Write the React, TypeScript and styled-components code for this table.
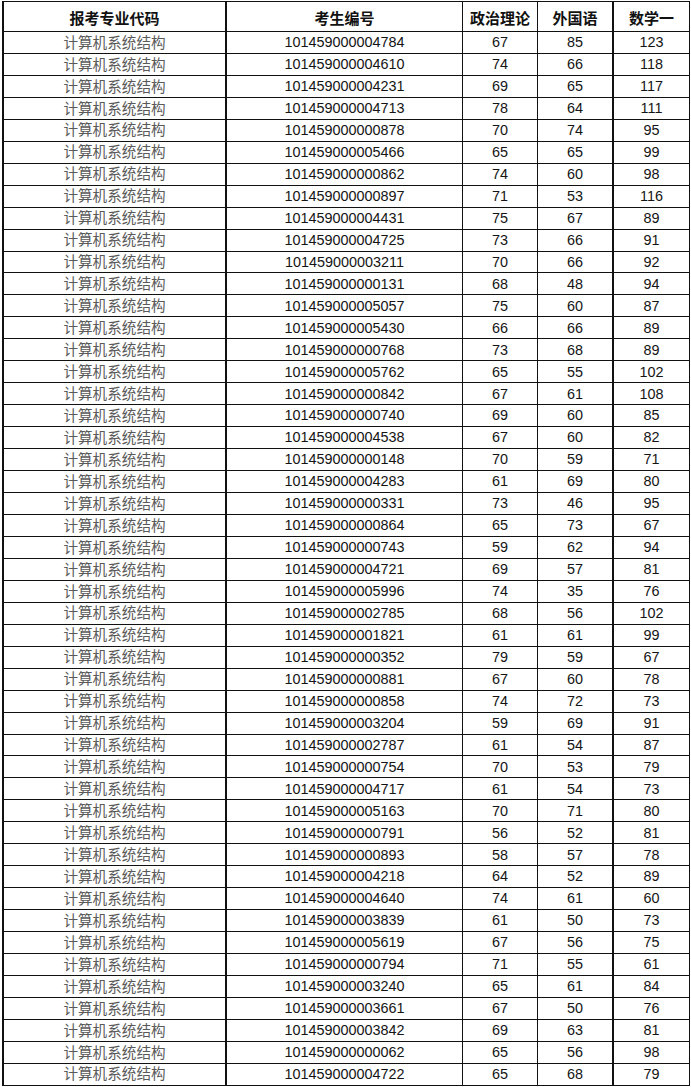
import React from "react";
import styled, { createGlobalStyle } from "styled-components";

const GlobalStyle = createGlobalStyle`
  html, body {
    margin: 0;
    padding: 0;
    background: #ffffff;
  }
  body {
    font-family: "Liberation Sans", "Noto Sans CJK SC", sans-serif;
  }
`;

const Page = styled.div`
  padding: 1px 0 0 2px;
  width: 691px;
  height: 1087px;
  box-sizing: border-box;
  overflow: hidden;
`;

const Grid = styled.div`
  display: grid;
  width: 688px;
  box-sizing: border-box;
  grid-template-columns: 222px 235px 74px 75px 75px;
  grid-template-rows: 29px repeat(48, 20.96px);
  gap: 1px;
  padding: 1px 1px 1px 2px;
  background: #111111;
`;

const HeaderCell = styled.div<{ $thick?: boolean }>`
  background: #ffffff;
  box-sizing: border-box;
  border-right: ${(p) => (p.$thick ? "1px solid #111111" : "none")};
  display: flex;
  align-items: center;
  justify-content: center;
  font-family: "Noto Sans CJK SC", sans-serif;
  font-weight: 700;
  font-size: 15px;
  color: #111111;
  line-height: 1;
  padding-top: 1px;
`;

const Cell = styled.div<{ $kind: "label" | "num"; $thick?: boolean }>`
  background: #ffffff;
  box-sizing: border-box;
  border-right: ${(p) => (p.$thick ? "1px solid #111111" : "none")};
  display: flex;
  align-items: center;
  justify-content: center;
  line-height: 1;
  white-space: nowrap;
  font-family: ${(p) =>
    p.$kind === "label"
      ? `"Noto Sans CJK SC", sans-serif`
      : `"Liberation Sans", Arial, sans-serif`};
  font-size: ${(p) => (p.$kind === "label" ? "14.6px" : "14.4px")};
  font-weight: 400;
  color: ${(p) => (p.$kind === "label" ? "#5a5a5a" : "#141414")};
  padding-bottom: ${(p) => (p.$kind === "label" ? "1px" : "0")};
`;

const headers = ["报考专业代码", "考生编号", "政治理论", "外国语", "数学一"];
const thickCols = [true, false, false, true, false];

const raw: [string, number, number, number][] = [
  ["4784", 67, 85, 123],
  ["4610", 74, 66, 118],
  ["4231", 69, 65, 117],
  ["4713", 78, 64, 111],
  ["0878", 70, 74, 95],
  ["5466", 65, 65, 99],
  ["0862", 74, 60, 98],
  ["0897", 71, 53, 116],
  ["4431", 75, 67, 89],
  ["4725", 73, 66, 91],
  ["3211", 70, 66, 92],
  ["0131", 68, 48, 94],
  ["5057", 75, 60, 87],
  ["5430", 66, 66, 89],
  ["0768", 73, 68, 89],
  ["5762", 65, 55, 102],
  ["0842", 67, 61, 108],
  ["0740", 69, 60, 85],
  ["4538", 67, 60, 82],
  ["0148", 70, 59, 71],
  ["4283", 61, 69, 80],
  ["0331", 73, 46, 95],
  ["0864", 65, 73, 67],
  ["0743", 59, 62, 94],
  ["4721", 69, 57, 81],
  ["5996", 74, 35, 76],
  ["2785", 68, 56, 102],
  ["1821", 61, 61, 99],
  ["0352", 79, 59, 67],
  ["0881", 67, 60, 78],
  ["0858", 74, 72, 73],
  ["3204", 59, 69, 91],
  ["2787", 61, 54, 87],
  ["0754", 70, 53, 79],
  ["4717", 61, 54, 73],
  ["5163", 70, 71, 80],
  ["0791", 56, 52, 81],
  ["0893", 58, 57, 78],
  ["4218", 64, 52, 89],
  ["4640", 74, 61, 60],
  ["3839", 61, 50, 73],
  ["5619", 67, 56, 75],
  ["0794", 71, 55, 61],
  ["3240", 65, 61, 84],
  ["3661", 67, 50, 76],
  ["3842", 69, 63, 81],
  ["0062", 65, 56, 98],
  ["4722", 65, 68, 79],
];

export default function App() {
  return (
    <>
      <GlobalStyle />
      <Page>
        <Grid>
          {headers.map((h, i) => (
            <HeaderCell key={h} $thick={thickCols[i]}>
              {h}
            </HeaderCell>
          ))}
          {raw.map(([id, a, b, c]) => (
            <React.Fragment key={id}>
              <Cell $kind="label" $thick={thickCols[0]}>
                计算机系统结构
              </Cell>
              <Cell $kind="num" $thick={thickCols[1]}>
                {"10145900000" + id}
              </Cell>
              <Cell $kind="num" $thick={thickCols[2]}>
                {a}
              </Cell>
              <Cell $kind="num" $thick={thickCols[3]}>
                {b}
              </Cell>
              <Cell $kind="num" $thick={thickCols[4]}>
                {c}
              </Cell>
            </React.Fragment>
          ))}
        </Grid>
      </Page>
    </>
  );
}
